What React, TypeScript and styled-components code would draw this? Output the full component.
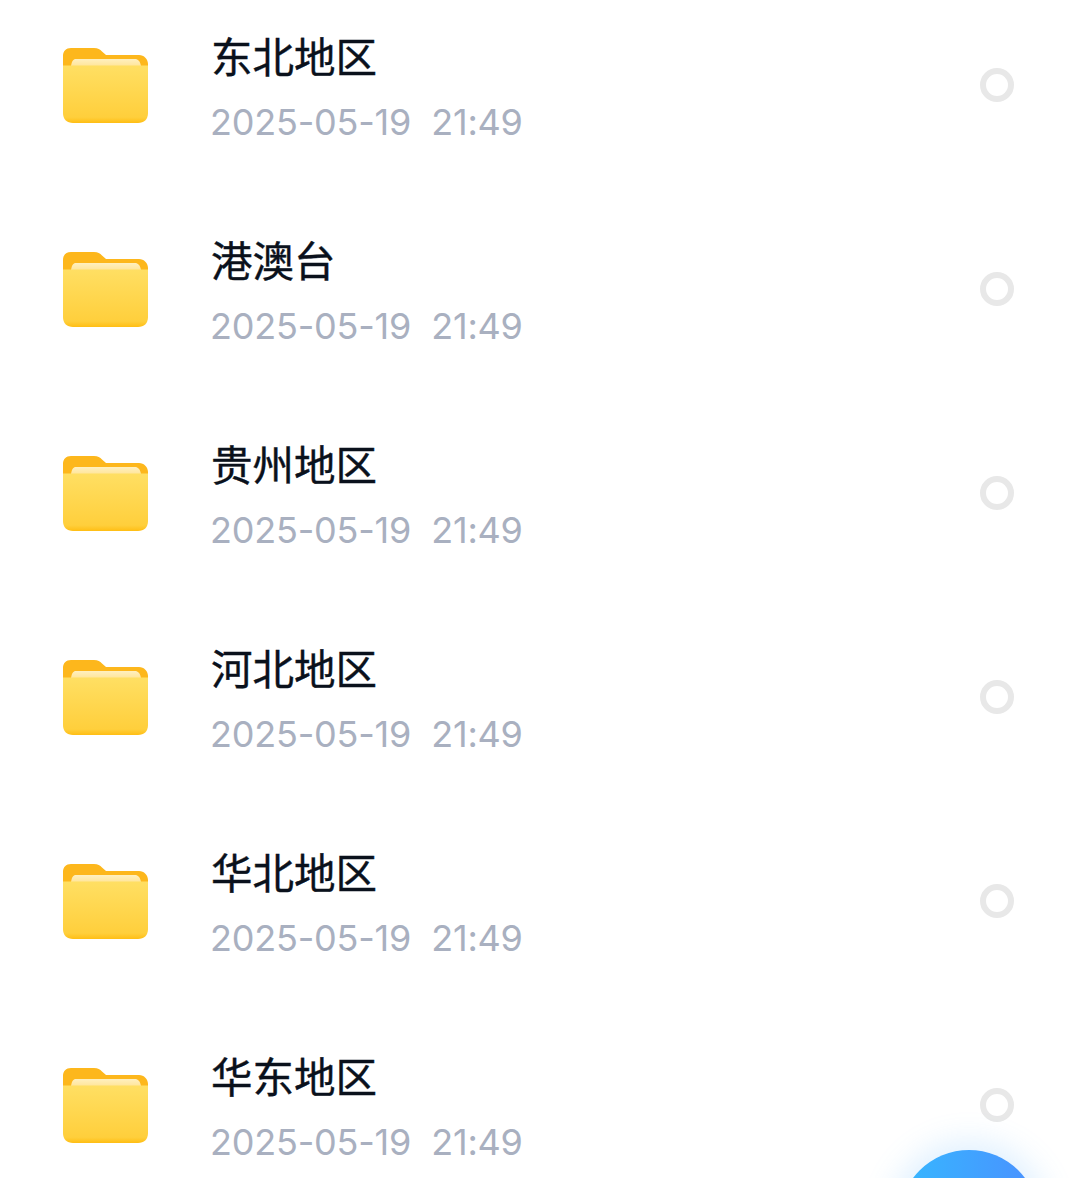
import styled, { createGlobalStyle } from 'styled-components';

const GlobalStyle = createGlobalStyle`
  html, body {
    margin: 0;
    padding: 0;
    background: #fff;
  }
`;

const Screen = styled.div`
  position: relative;
  width: 1080px;
  height: 1178px;
  overflow: hidden;
  background: #fff;
  font-family: "Noto Sans CJK SC", "Noto Sans", sans-serif;
`;

// the list is scrolled, the first row starts above the top edge
const List = styled.div`
  display: flex;
  flex-direction: column;
  margin-top: -17px;
`;

const Row = styled.div`
  display: flex;
  align-items: center;
  height: 204px;
  padding: 0 66px 0 63px;
`;

const FolderIcon = styled.svg`
  flex: none;
  width: 85px;
  height: 76px;
  margin: 2px 62px 0 0;
`;

const Info = styled.div`
  flex: 1;
  display: flex;
  flex-direction: column;
  gap: 10px;
  padding-top: 7px;
`;

const Title = styled.div`
  margin-left: 1px;
  font-size: 41.5px;
  line-height: 57px;
  font-weight: 400;
  color: #0a111c;
  -webkit-text-stroke: 0.4px #0a111c;
`;

const Time = styled.div`
  display: flex;
  gap: 20px;
  font-family: "Inter", "Noto Sans", sans-serif;
  font-size: 36px;
  letter-spacing: -0.2px;
  line-height: 57px;
  color: #a9b0c0;
`;

const Radio = styled.div`
  flex: none;
  box-sizing: border-box;
  width: 34px;
  height: 34px;
  border: 6px solid #e8e8e8;
  border-radius: 50%;
`;

const Fab = styled.div`
  position: absolute;
  left: 899px;
  top: 1150px;
  width: 140px;
  height: 140px;
  border-radius: 50%;
  background: linear-gradient(90deg, #36b8ff 0%, #4a90ff 100%);
  box-shadow: 0 0 30px 10px rgba(90, 180, 255, 0.18);
`;

const Folder = () => (
  <FolderIcon viewBox="0 0 85 76">
    <defs>
      <linearGradient id="front" x1="0" y1="0" x2="0" y2="1">
        <stop offset="0" stopColor="#ffdf63" />
        <stop offset="0.9" stopColor="#ffcf3c" />
        <stop offset="1" stopColor="#ffbe14" />
      </linearGradient>
      <linearGradient id="paper" x1="0" y1="0" x2="0" y2="1">
        <stop offset="0" stopColor="#fff0c0" />
        <stop offset="1" stopColor="#ffe59a" />
      </linearGradient>
    </defs>
    <path
      d="M8 0H31C35 0 37 1.500 39 3.500L43 7H76C81 7 85 11 85 16V30H0V8C0 3 3 0 8 0Z"
      fill="#fdb71c"
    />
    <path d="M13 11H72C75 11 77 13 78 18H8C9 13 10 11 13 11Z" fill="url(#paper)" />
    <path
      d="M0 17.500H85V65C85 71.500 81 75 75 75H10C4 75 0 71.500 0 65Z"
      fill="url(#front)"
    />
  </FolderIcon>
);

const folders = ['东北地区', '港澳台', '贵州地区', '河北地区', '华北地区', '华东地区'];

export default function App() {
  return (
    <Screen>
      <GlobalStyle />
      <List>
        {folders.map((name) => (
          <Row key={name}>
            <Folder />
            <Info>
              <Title>{name}</Title>
              <Time>
                <span>2025-05-19</span>
                <span>21:49</span>
              </Time>
            </Info>
            <Radio />
          </Row>
        ))}
      </List>
      <Fab />
    </Screen>
  );
}
